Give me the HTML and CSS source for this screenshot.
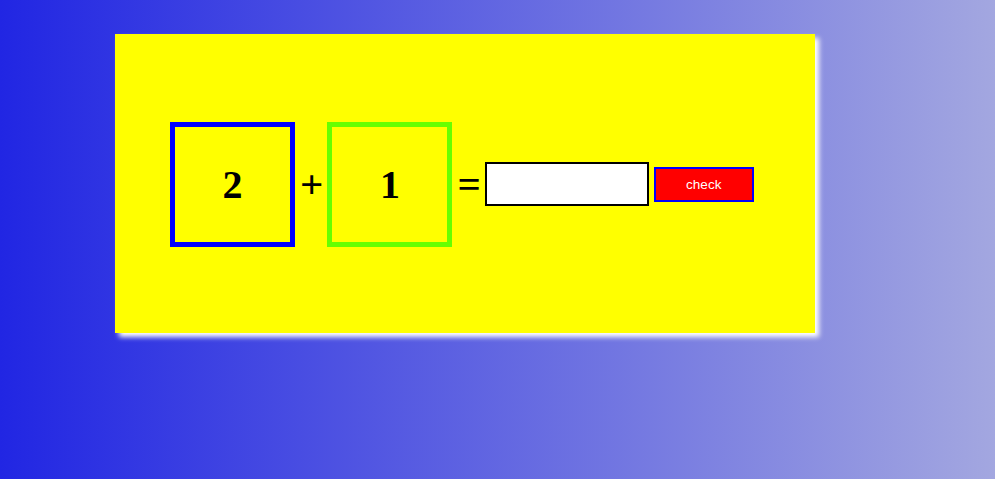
FILE: index.html
```html
<!DOCTYPE html>
<html>
<head>
<meta charset="utf-8">
<link rel="stylesheet" href="styles.css">
</head>
<body>
<div class="card">
  <div class="equation">
    <div class="num num-a">2</div>
    <span class="op op-plus">+</span>
    <div class="num num-b">1</div>
    <span class="op op-eq">=</span>
    <input class="answer" type="text">
    <button class="check">check</button>
  </div>
</div>
</body>
</html>
```
FILE: styles.css
```css
html, body {
  margin: 0;
  padding: 0;
  height: 100%;
}
body {
  background: linear-gradient(to right, #2126e3, #a3a7e0);
  font-family: "Liberation Serif", serif;
  padding-top: 34px;
  box-sizing: border-box;
}
.card {
  margin-left: 115px;
  width: 700px;
  height: 299px;
  background: #ffff00;
  box-shadow: 4px 4px 5px #ffffff;
  display: flex;
  align-items: center;
  padding-left: 55px;
  box-sizing: border-box;
}
.equation {
  display: flex;
  align-items: center;
  margin-top: 1px;
}
.num {
  width: 115px;
  height: 115px;
  border: 5px solid;
  display: flex;
  align-items: center;
  justify-content: center;
  font-weight: bold;
  font-size: 40px;
  color: #000;
}
.num-a { border-color: #0000ff; }
.num-b { border-color: #66ff00; }
.op {
  font-weight: bold;
  font-size: 41px;
  line-height: 1;
}
.op-plus { margin: 0 4px 0 5px; }
.op-eq { margin: 0 4px 0 5px; }
.answer {
  width: 160px;
  height: 40px;
  border: 2px solid #000;
  background: #fff;
  padding: 0;
  margin: 0;
  box-sizing: content-box;
}
.check {
  margin-left: 5px;
  width: 100px;
  height: 35px;
  background: #ff0000;
  border: 2px solid #0000ff;
  color: #fff;
  font-family: "Liberation Sans", Arial, sans-serif;
  font-size: 13.5px;
  padding: 0;
}
```
